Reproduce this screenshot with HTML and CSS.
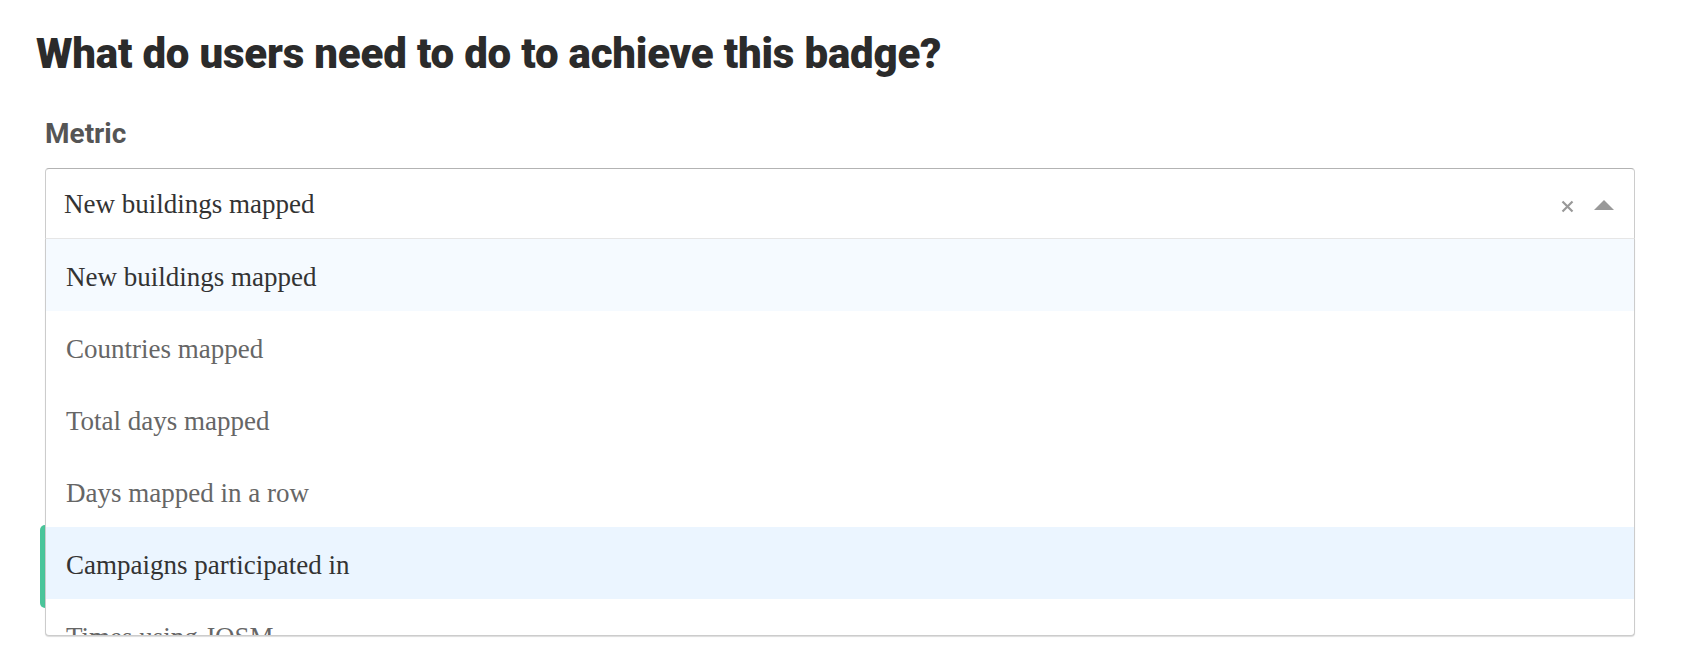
FILE: index.html
```html
<!DOCTYPE html>
<html lang="en">
<head>
<meta charset="utf-8">
<title>Badge requirements</title>
<link rel="stylesheet" href="styles.css">
</head>
<body>
<main class="page">
  <h1 class="title">What do users need to do to achieve this badge?</h1>
  <section class="field">
    <label class="label">Metric</label>
    <div class="select">
      <div class="control">
        <span class="value">New buildings mapped</span>
        <span class="clear"><svg width="13" height="13" viewBox="0 0 13 13"><path d="M1.5 1.5 L11.5 11.5 M11.5 1.5 L1.5 11.5" stroke="#999" stroke-width="2.2" fill="none"/></svg></span>
        <span class="arrow"></span>
      </div>
      <div class="menu">
        <div class="option is-selected">New buildings mapped</div>
        <div class="option">Countries mapped</div>
        <div class="option">Total days mapped</div>
        <div class="option">Days mapped in a row</div>
        <div class="option is-focused">Campaigns participated in</div>
        <div class="option">Times using JOSM</div>
        <div class="option">Edits</div>
      </div>
    </div>
    <div class="next-field">
      <div class="accent"></div>
    </div>
  </section>
</main>
</body>
</html>
```

FILE: styles.css
```css
html, body {
  margin: 0;
  padding: 0;
  background: #fff;
}
.page {
  min-height: 652px;
  box-sizing: border-box;
  padding: 30px 53px 0 36px;
}
.title {
  margin: 0;
  font-family: Roboto, "Liberation Sans", sans-serif;
  font-weight: 900;
  font-size: 42px;
  line-height: 48px;
  color: #2b2b2b;
  letter-spacing: -0.2px;
}
.field {
  margin-left: 9px;
  margin-top: 39px;
}
.label {
  display: block;
  font-family: Roboto, "Liberation Sans", sans-serif;
  font-weight: 700;
  font-size: 28px;
  line-height: 34px;
  color: #555;
}
.select {
  position: relative;
  margin-top: 17px;
}
.control {
  display: flex;
  align-items: center;
  box-sizing: border-box;
  height: 71px;
  border: 1px solid #ccc;
  border-top-color: #b3b3b3;
  border-bottom-color: #e6e6e6;
  border-radius: 4px 4px 0 0;
  padding: 0 0 0 18px;
  font-family: "Liberation Serif", serif;
  font-size: 27px;
  color: #333;
}
.value {
  flex: 1;
  line-height: 68px;
}
.clear {
  display: flex;
  width: 13px;
  height: 13px;
  margin-right: 20px;
  margin-top: 6px;
}
.arrow {
  width: 0;
  height: 0;
  border-left: 10px solid transparent;
  border-right: 10px solid transparent;
  border-bottom: 10px solid #999;
  margin-right: 20px;
  margin-top: 3px;
}
.menu {
  position: absolute;
  top: 71px;
  left: 0;
  right: 0;
  height: 397px;
  box-sizing: border-box;
  overflow: hidden;
  background: #fff;
  border: 1px solid #ccc;
  border-top: none;
  border-radius: 0 0 4px 4px;
  box-shadow: 0 1px 1px rgba(0, 0, 0, 0.14);
  z-index: 2;
}
.option {
  height: 72px;
  line-height: 72px;
  padding: 2px 0 0 20px;
  box-sizing: border-box;
  font-family: "Liberation Serif", serif;
  font-size: 27px;
  color: #666;
}
.option.is-selected {
  background: #f5faff;
  color: #333;
}
.option.is-focused {
  background: #ebf5ff;
  color: #333;
}
.next-field {
  margin-top: 286px;
  margin-left: -5px;
}
.accent {
  width: 240px;
  height: 83px;
  background: #4ac59a;
  border-radius: 5px;
}
```
